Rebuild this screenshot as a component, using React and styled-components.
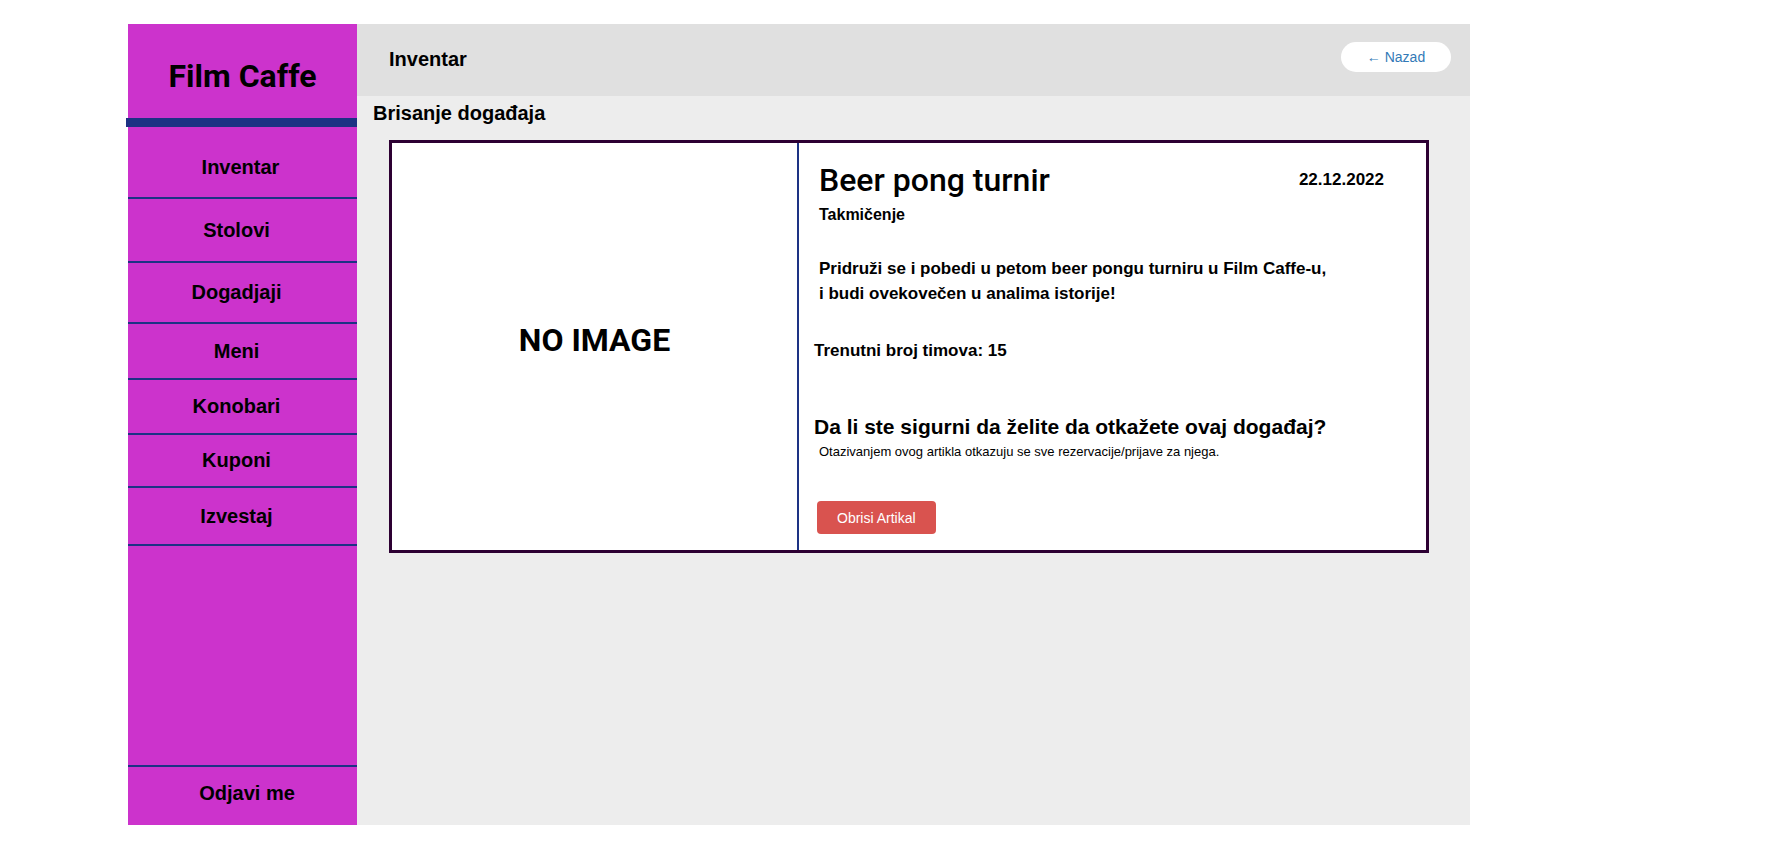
import React from 'react'
import styled, { createGlobalStyle } from 'styled-components'

const navy = '#1d3284'

const navigacija = [
  { naziv: 'Inventar', visina: 72, gore: 10, desno: 4 },
  { naziv: 'Stolovi', visina: 64 },
  { naziv: 'Dogadjaji', visina: 61 },
  { naziv: 'Meni', visina: 56 },
  { naziv: 'Konobari', visina: 55 },
  { naziv: 'Kuponi', visina: 53 },
  { naziv: 'Izvestaj', visina: 58 },
]

const dogadjaj = {
  naziv: 'Beer pong turnir',
  datum: '22.12.2022',
  tip: 'Takmičenje',
  opis: ['Pridruži se i pobedi u petom beer pongu turniru u Film Caffe-u,', 'i budi ovekovečen u analima istorije!'],
  timovi: 15,
}

function App() {
  return (
    <>
      <GlobalStyle />
      <Layout>
        <Sidebar>
          <Brand>Film Caffe</Brand>
          <BrandBar />
          {navigacija.map((stavka) => (
            <NavItem key={stavka.naziv} $h={stavka.visina} $pt={stavka.gore} $pr={stavka.desno}>
              {stavka.naziv}
            </NavItem>
          ))}
          <Spacer />
          <Logout>Odjavi me</Logout>
        </Sidebar>

        <Main>
          <Header>
            <HeaderTitle>Inventar</HeaderTitle>
            <BackButton>← Nazad</BackButton>
          </Header>

          <Content>
            <PageTitle>Brisanje događaja</PageTitle>

            <Card>
              <ImageSide>NO IMAGE</ImageSide>

              <InfoSide>
                <TitleRow>
                  <EventName>{dogadjaj.naziv}</EventName>
                  <EventDate>{dogadjaj.datum}</EventDate>
                </TitleRow>
                <EventType>{dogadjaj.tip}</EventType>
                <Description>
                  {dogadjaj.opis[0]}
                  <br />
                  {dogadjaj.opis[1]}
                </Description>
                <Teams>Trenutni broj timova: {dogadjaj.timovi}</Teams>
                <Question>Da li ste sigurni da želite da otkažete ovaj događaj?</Question>
                <Note>Otazivanjem ovog artikla otkazuju se sve rezervacije/prijave za njega.</Note>
                <DeleteButton>Obrisi Artikal</DeleteButton>
              </InfoSide>
            </Card>
          </Content>
        </Main>
      </Layout>
    </>
  )
}

export default App

const GlobalStyle = createGlobalStyle`
  body {
    margin: 0;
    background: #fff;
    font-family: "Liberation Sans", Arial, sans-serif;
    color: #000;
  }
`

const Layout = styled.div`
  display: flex;
  width: 1342px;
  height: 801px;
  margin: 24px 0 0 128px;
`

const Sidebar = styled.aside`
  width: 229px;
  flex-shrink: 0;
  background-color: #cc33cc;
  display: flex;
  flex-direction: column;
`

const Brand = styled.div`
  height: 94px;
  box-sizing: border-box;
  padding-top: 10px;
  display: flex;
  align-items: center;
  justify-content: center;
  font-family: Roboto, sans-serif;
  font-weight: 700;
  font-size: 32px;
`

const BrandBar = styled.div`
  height: 9px;
  margin: 0 -1px 0 -2px;
  background-color: ${navy};
`

const NavItem = styled.div`
  height: ${(p) => p.$h}px;
  box-sizing: border-box;
  padding: ${(p) => p.$pt || 0}px ${(p) => p.$pr ?? 12}px 0 0;
  border-bottom: 2px solid ${navy};
  display: flex;
  align-items: center;
  justify-content: center;
  font-weight: 700;
  font-size: 20px;
  cursor: pointer;
`

const Spacer = styled.div`
  flex: 1;
`

const Logout = styled.div`
  height: 60px;
  box-sizing: border-box;
  padding: 0 0 6px 9px;
  border-top: 2px solid ${navy};
  display: flex;
  align-items: center;
  justify-content: center;
  font-weight: 700;
  font-size: 20px;
  cursor: pointer;
`

const Main = styled.main`
  flex: 1;
  background-color: #ededed;
  display: flex;
  flex-direction: column;
`

const Header = styled.header`
  height: 72px;
  box-sizing: border-box;
  padding: 0 19px 0 32px;
  background-color: #e0e0e0;
  display: flex;
  align-items: center;
  justify-content: space-between;
`

const HeaderTitle = styled.h2`
  margin: 0 0 2px;
  font-size: 20px;
  font-weight: 700;
`

const BackButton = styled.button`
  width: 110px;
  height: 30px;
  margin-bottom: 6px;
  border: none;
  border-radius: 15px;
  background-color: #fff;
  color: #337ab7;
  font-family: "Liberation Sans", Arial, sans-serif;
  font-size: 14px;
  cursor: pointer;
`

const Content = styled.section`
  padding-left: 16px;
`

const PageTitle = styled.h3`
  margin: 5px 0 15px;
  line-height: 24px;
  font-size: 20px;
  font-weight: 700;
`

const Card = styled.div`
  width: 1040px;
  height: 413px;
  box-sizing: border-box;
  margin-left: 16px;
  border: 3px solid #2d0033;
  background-color: #fff;
  display: flex;
`

const ImageSide = styled.div`
  width: 405px;
  flex-shrink: 0;
  padding-bottom: 14px;
  box-sizing: border-box;
  display: flex;
  align-items: center;
  justify-content: center;
  font-family: Roboto, sans-serif;
  font-weight: 700;
  font-size: 32px;
`

const InfoSide = styled.div`
  flex: 1;
  border-left: 2px solid ${navy};
  padding: 18px 42px 0 20px;
  display: flex;
  flex-direction: column;
  align-items: flex-start;
`

const TitleRow = styled.div`
  align-self: stretch;
  display: flex;
  align-items: center;
  justify-content: space-between;
`

const EventName = styled.h1`
  margin: 0;
  line-height: 38px;
  font-family: Roboto, sans-serif;
  font-weight: 500;
  font-size: 32px;
`

const EventDate = styled.span`
  line-height: 20px;
  font-weight: 700;
  font-size: 17px;
`

const EventType = styled.div`
  margin-top: 6px;
  line-height: 20px;
  font-weight: 700;
  font-size: 16px;
`

const Description = styled.p`
  margin: 31px 0 0;
  line-height: 25px;
  font-weight: 700;
  font-size: 17px;
`

const Teams = styled.p`
  margin: 35px 0 0 -5px;
  line-height: 20px;
  font-weight: 700;
  font-size: 17px;
`

const Question = styled.h3`
  margin: 53px 0 0 -5px;
  line-height: 26px;
  font-weight: 700;
  font-size: 21px;
`

const Note = styled.p`
  margin: 4px 0 0;
  line-height: 16px;
  font-size: 13px;
`

const DeleteButton = styled.button`
  height: 33px;
  margin: 41px 0 0 -2px;
  padding: 0 20px;
  border: none;
  border-radius: 4px;
  background-color: #d9534f;
  color: #fff;
  font-family: "Liberation Sans", Arial, sans-serif;
  font-size: 14px;
  cursor: pointer;
`
